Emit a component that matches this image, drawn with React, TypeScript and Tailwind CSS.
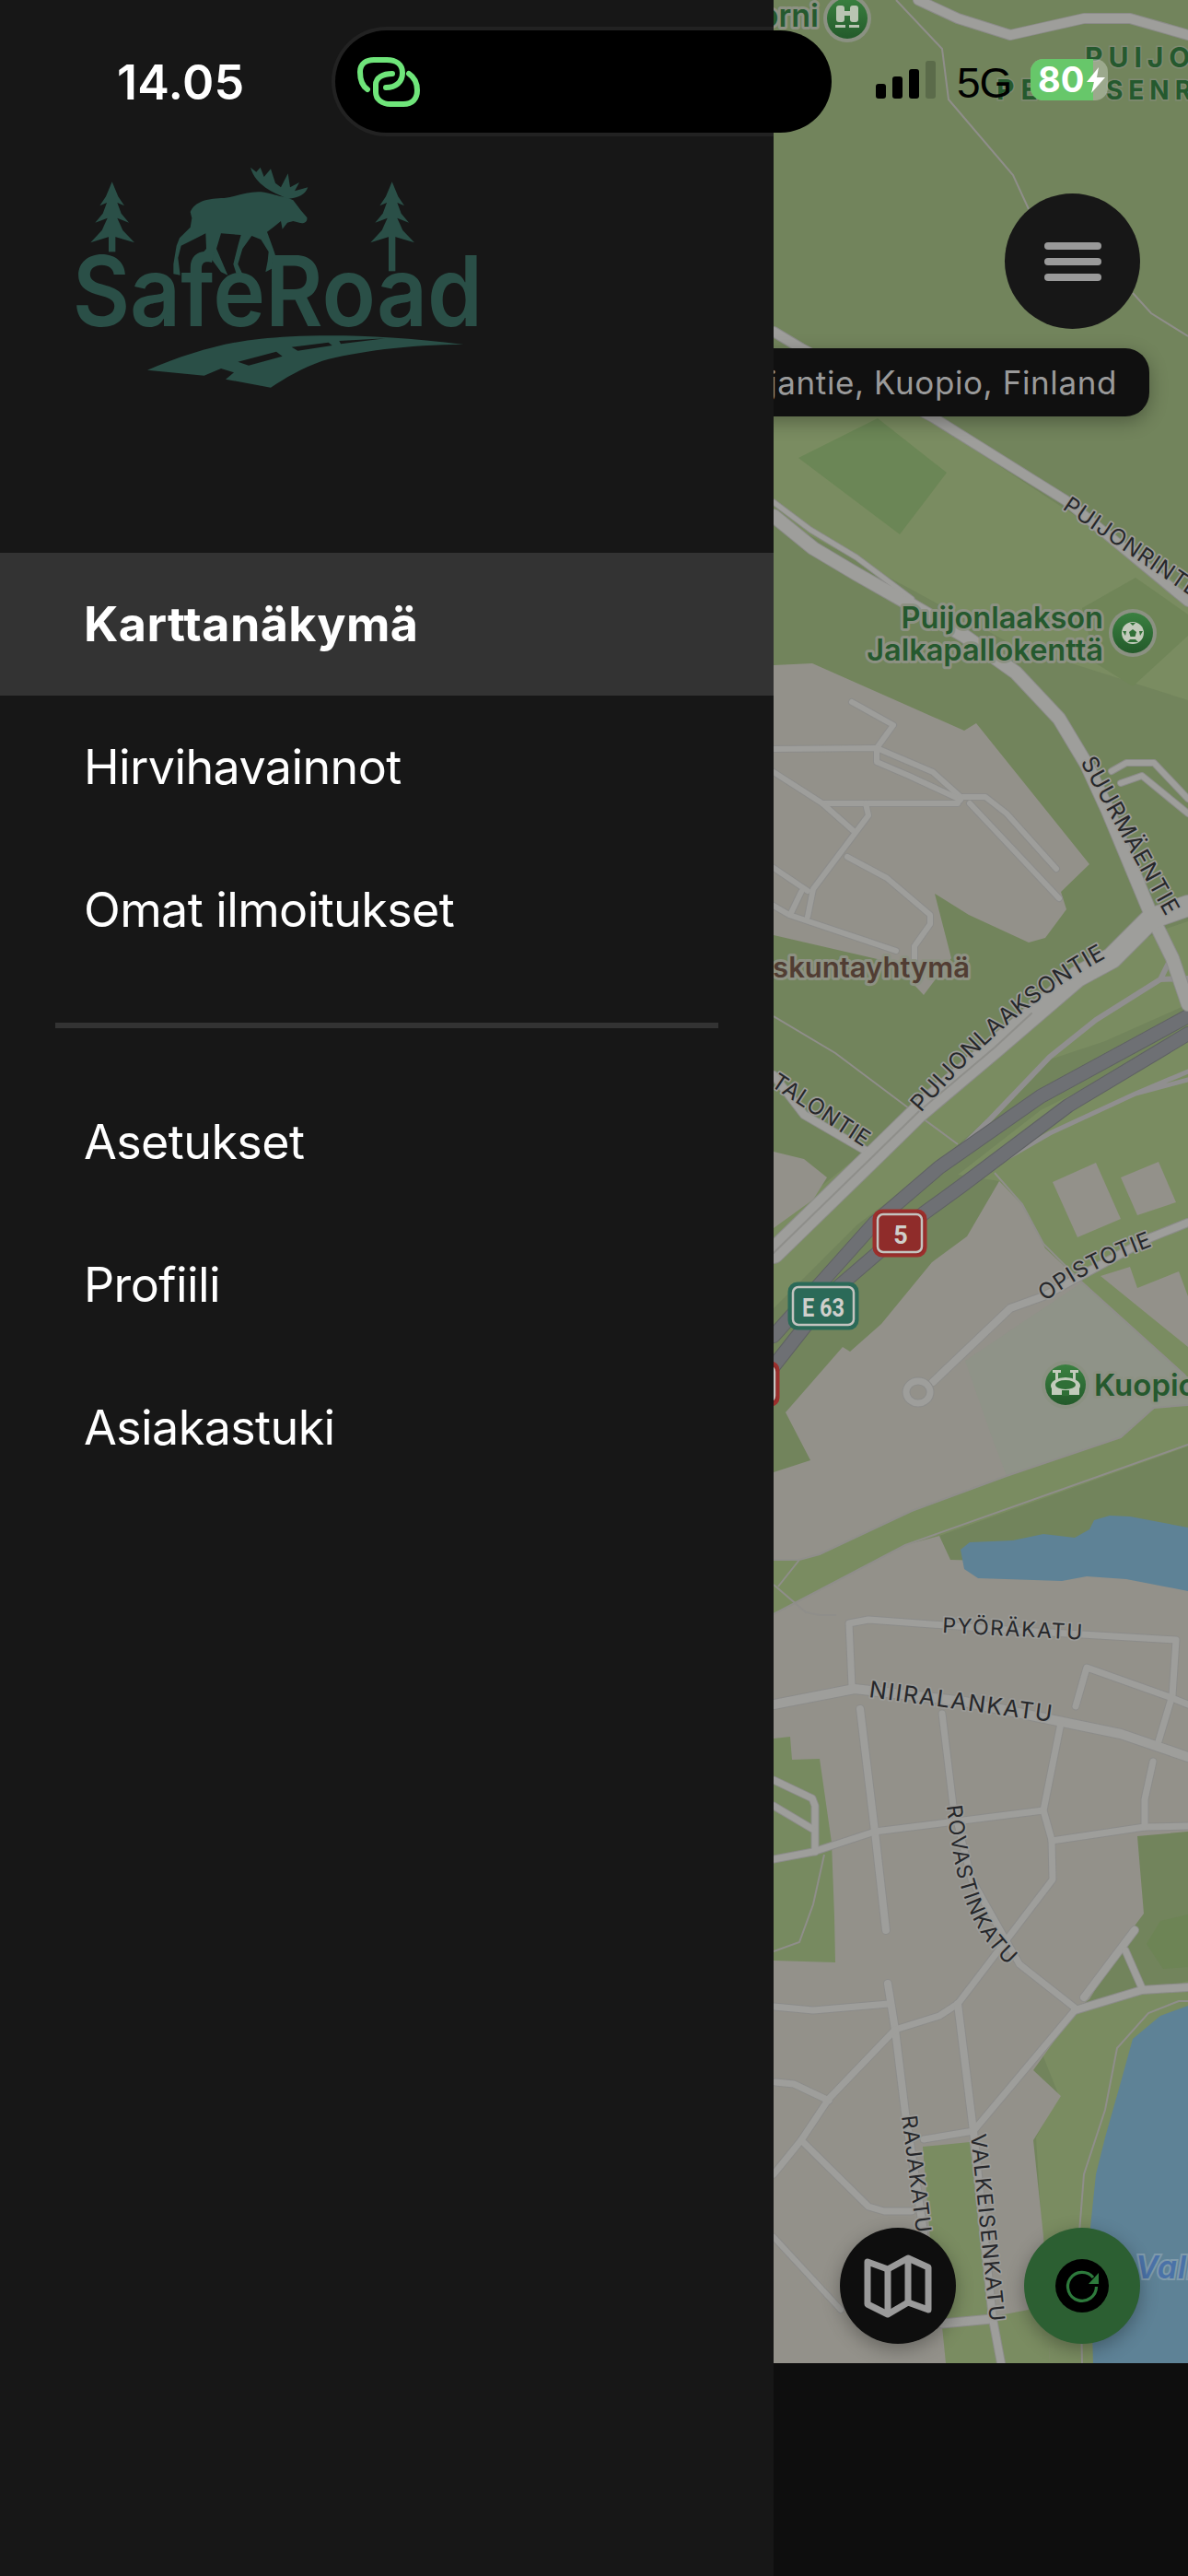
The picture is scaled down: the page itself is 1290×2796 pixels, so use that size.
import React from 'react';

const FONT = "font-['Inter','Noto_Sans',sans-serif]";
const ROAD_FILL = '#9e9e9b';
const ROAD_CASE = '#8c8c8a';

// all map coordinates are page pixels, the svg viewBox starts at the drawer edge
const lightGreen = [
  'M840 1752L983 1677L1020 1667L1290 1570V1525H1253L1217 1560L1093 1602L990 1640L890 1687L840 1693Z',
  'M1290 1125L1130 1205L1040 1275L1085 1282L1135 1355L1175 1392L1290 1495Z',
  'M840 1330L950 1240L1000 1200L1080 1135L1170 1060L1260 1010L1290 1000V1090L1200 1130L1140 1150L1060 1225L1010 1270L930 1330L840 1420Z',
  'M840 380L1000 450L1290 640V760L1100 700L990 640L840 560Z',
  'M1120 2200L1290 2150V2565H1140L1125 2320L1150 2275Z',
  'M893 1880H906V2128H840V1890Z',
];

const blocks = [
  'M840 1015V722L882 720L1047 793L1060 785L1183 938L1152 968L1158 987L1135 1018L1117 1023L1052 993L1015 970L1033 1040L1003 1080L970 1045Z',
  'M840 1250L873 1258L898 1278L883 1302L840 1333Z',
  'M1085 1282L1112 1310L1135 1355L1175 1392L1290 1495V1525L1253 1528L1217 1560L1093 1602L990 1640L890 1687L868 1693H840V1598L880 1585L867 1560L853 1533L915 1462L923 1467L957 1437L1012 1370L1050 1342Z',
  'M1195 1385L1227 1375L1235 1398L1280 1380L1290 1407V1462Z',
  'M1143 1283L1190 1262L1217 1323L1170 1343Z',
  'M1217 1278L1258 1261L1277 1305L1235 1319Z',
  'M840 1752L983 1677L1020 1667L1032 1693L1290 1700V1988L1235 1993L1242 2077L1227 2097L1183 2170L1170 2180L1122 2247L1152 2275L1122 2323L1133 2427L1140 2565H840Z',
];

const roads: [number, string][] = [
  [10, 'M997 0L1040 20L1097 38L1177 20L1227 20L1290 38'],
  [10, 'M840 360L870 378L1013 453L1120 520L1157 543L1290 653'],
  [14, 'M840 560L883 595L930 623L990 657L1047 690L1103 730L1150 780L1180 830L1203 880L1250 993L1273 1040L1290 1090'],
  [5, 'M840 545L880 575L930 605L990 650'],
  [6, 'M1207 837L1223 828L1253 828L1290 867'],
  [6, 'M1217 850L1240 842L1290 883'],
  [6, 'M925 762L970 787L952 812'],
  [6, 'M840 813L952 812L1013 838L1043 865L1070 865L1093 883L1147 943'],
  [6, 'M952 812V827L987 842L1043 868'],
  [6, 'M893 872H1040L1043 865'],
  [6, 'M1053 872L1150 975'],
  [6, 'M840 838L893 872L928 903'],
  [6, 'M940 872L943 885L883 965L877 995'],
  [6, 'M920 930L963 953L1010 993V1003L993 1027V1050'],
  [6, 'M840 942L877 967'],
  [6, 'M840 983L857 993L973 1032'],
  [6, 'M870 968L858 993'],
  [8, 'M840 1167L873 1210L947 1253'],
  [8, 'M1013 1500L1097 1420L1133 1407L1250 1343L1290 1327'],
  [7, 'M925 1830L922 1762L943 1758L1107 1770L1277 1780L1273 1840L1258 1890'],
  [10, 'M840 1850L928 1833L1047 1847L1217 1882L1290 1907'],
  [7, 'M1168 1852L1180 1810L1270 1842L1290 1850'],
  [8, 'M934 1855L950 1988L962 2095'],
  [7, 'M1023 1860L1035 1960L1055 2040L1107 2132L1168 2180'],
  [7, 'M840 2018L883 2010L950 1988L1133 1965'],
  [7, 'M1152 1870L1133 1965L1142 1997L1143 2040L1040 2175'],
  [7, 'M1142 1998L1243 1983L1290 1982'],
  [7, 'M1252 1912L1243 1953V1983'],
  [7, 'M840 1932L882 1952L885 1960V2010'],
  [7, 'M840 1960L882 1985'],
  [7, 'M840 2178L883 2182L965 2175'],
  [8, 'M964 2153L972 2203L983 2293L1003 2423'],
  [7, 'M972 2203L1020 2188L1040 2175'],
  [8, 'M1040 2175L1057 2313'],
  [7, 'M1057 2313L1167 2182'],
  [8, 'M1167 2182L1240 2160L1290 2157'],
  [8, 'M1177 2168L1232 2095'],
  [7, 'M1222 2117L1240 2158'],
  [7, 'M972 2203L900 2278L870 2323L840 2360'],
  [7, 'M842 2260L862 2262L900 2280'],
  [7, 'M870 2323L943 2395L960 2400H990'],
  [6, 'M840 2428L913 2507'],
  [7, 'M1003 2322L1057 2313'],
  [9, 'M1023 2522L1077 2517'],
  [8, 'M1057 2313L1078 2517L1087 2565'],
];

const thinPaths = [
  'M973 0L1023 53L1030 108L1100 190L1117 227M1230 318L1250 340L1290 365',
  'M840 1103L907 1143L983 1200L1040 1242M1080 1273L1110 1307L1133 1350L1173 1390L1287 1493',
  'M840 1693H868L890 1687L990 1640L1093 1602L1217 1560L1253 1528L1290 1525',
  'M840 1752L983 1677L1290 1568',
  'M840 1720L875 1750L890 1753H908M845 1722L868 1693',
  'M895 2013L883 2067L868 2108L840 2118',
  'M1290 2172H1280L1247 2185L1213 2223L1200 2290L1177 2360L1172 2423L1175 2565',
];

const roadLabels = [
  { id: 'l1', text: 'PUIJONRINTE', d: 'M1153 552L1300 652', size: 24, len: 172 },
  { id: 'l2', text: 'SUURMÄENTIE', d: 'M1173 827L1268 998', size: 25, len: 192 },
  { id: 'l3', text: 'PUIJONLAAKSONTIE', d: 'M1000 1208C1060 1140 1110 1090 1200 1040', size: 25, len: 264 },
  { id: 'l4', text: 'TALONTIE', d: 'M836 1178L945 1250', size: 24, len: 122 },
  { id: 'l5', text: 'OPISTOTIE', d: 'M1135 1413C1170 1385 1205 1370 1252 1352', size: 24, len: 132 },
  { id: 'l6', text: 'PYÖRÄKATU', d: 'M1023 1772L1180 1780', size: 23, len: 152 },
  { id: 'l7', text: 'NIIRALANKATU', d: 'M943 1842L1150 1870', size: 25, len: 200 },
  { id: 'l8', text: 'ROVASTINKATU', d: 'M1028 1960C1036 2030 1045 2090 1098 2136', size: 23, len: 190 },
  { id: 'l9', text: 'RAJAKATU', d: 'M979 2297L996 2430', size: 23, len: 128 },
  { id: 'l10', text: 'VALKEISENKATU', d: 'M1054 2317L1076 2530', size: 23, len: 204 },
];

const PoiBadge: React.FC<{ cx: number; cy: number; children?: React.ReactNode }> = ({ cx, cy, children }) => (
  <g transform={`translate(${cx} ${cy})`}>
    <circle r="26" fill="#8b9182" />
    <circle r="22" fill="url(#poi)" />
    {children}
  </g>
);

const MapLabel: React.FC<{ x: number; y: number; anchor?: 'start' | 'end'; size: number; fill: string; children: React.ReactNode }> = ({ x, y, anchor = 'start', size, fill, children }) => (
  <text x={x} y={y} textAnchor={anchor} fontSize={size} fontWeight={600} fill={fill} stroke="#8d9183" strokeWidth={6} strokeLinejoin="round" paintOrder="stroke" fontFamily="Inter, sans-serif">
    {children}
  </text>
);

const MapCanvas: React.FC = () => (
  <svg className="w-[450px] h-[2565px] block" viewBox="840 0 450 2565">
    <defs>
      <linearGradient id="poi" x1="0" y1="0" x2="0" y2="1">
        <stop offset="0" stopColor="#3a8040" />
        <stop offset="1" stopColor="#235a2a" />
      </linearGradient>
      {roadLabels.map((l) => (
        <path key={l.id} id={l.id} d={l.d} />
      ))}
    </defs>
    <rect x="840" y="0" width="450" height="2565" fill="#72845c" />
    {lightGreen.map((d) => (
      <path key={d} d={d} fill="#7a8c61" />
    ))}
    <path d="M867 497L953 454L1028 513L977 580Z" fill="#6b8656" />
    <path d="M1233 627L1290 667V690L1230 745L1190 720L1175 660Z" fill="#708558" />
    <path d="M1245 2110L1260 2085L1290 2078V2135L1263 2137Z" fill="#6d8455" />
    {blocks.map((d) => (
      <path key={d} d={d} fill="#93918a" />
    ))}
    <path d="M1048 1477L1077 1560L1093 1602L1217 1560L1253 1528L1290 1525V1495L1175 1392Z" fill="#8f9388" />
    <path d="M840 1887L858 1885L860 1910L890 1909L903 2000L906 2080L907 2130L840 2128Z" fill="#778a60" />
    <path d="M1002 2330L1053 2325L1075 2512L1023 2522L1010 2430Z" fill="#7a8c61" />
    <path d="M1023 2525L1117 2507L1135 2430L1140 2565H1027Z" fill="#7a8c61" />
    <path d="M1043 1682L1053 1674L1100 1672L1133 1665L1167 1669L1183 1660L1188 1650L1205 1645L1227 1646L1290 1658V1727L1223 1714L1180 1711L1153 1716L1062 1713L1047 1703Z" fill="#5e8296" />
    <path d="M1290 2177L1260 2188L1230 2213L1217 2260L1200 2320L1190 2360L1183 2427L1187 2565H1290Z" fill="#5e8296" />

    <g fill="none" stroke="#8f8e8a" strokeWidth="2">
      {thinPaths.map((d) => (
        <path key={d} d={d} />
      ))}
    </g>

    {/* ramps and highway */}
    <g fill="none" strokeLinecap="round" strokeLinejoin="round">
      <path d="M1027 1262L1073 1217L1140 1147L1190 1107L1260 1063L1270 1043M1260 1063L1290 1062" stroke="#908f8f" strokeWidth="6" />
      <path d="M1053 1285L1093 1257L1140 1230L1233 1187L1290 1163M1233 1187L1290 1172" stroke="#908f8f" strokeWidth="5" />
      <path d="M840 1450L950 1327L1020 1267L1130 1190L1290 1103" stroke="#5f6163" strokeWidth="16" />
      <path d="M840 1483L903 1403L1003 1317L1043 1288L1160 1200L1290 1122" stroke="#5f6163" strokeWidth="16" />
      <path d="M840 1450L950 1327L1020 1267L1130 1190L1290 1103" stroke="#6e7074" strokeWidth="14" />
      <path d="M840 1483L903 1403L1003 1317L1043 1288L1160 1200L1290 1122" stroke="#6e7074" strokeWidth="14" />
    </g>

    {/* streets */}
    <g fill="none" strokeLinecap="round" strokeLinejoin="round">
      <path d="M840 1360L950 1253L997 1207L1080 1137L1170 1060L1207 1040L1250 997L1290 983" stroke={ROAD_CASE} strokeWidth="24" />
      {roads.map(([w, d]) => (
        <path key={d} d={d} stroke={ROAD_CASE} strokeWidth={w + 2} />
      ))}
      {roads.map(([w, d]) => (
        <path key={d} d={d} stroke={ROAD_FILL} strokeWidth={w} />
      ))}
      <path d="M840 1360L950 1253L997 1207L1080 1137L1170 1060L1207 1040L1250 997L1290 983" stroke={ROAD_FILL} strokeWidth="22" />
      <path d="M840 1360L950 1253L997 1207L1080 1137L1120 1100" stroke="#8e8e8a" strokeWidth="2" />
      <ellipse cx="997" cy="1511" rx="13" ry="12" stroke={ROAD_CASE} strokeWidth="9" />
      <ellipse cx="997" cy="1511" rx="13" ry="12" stroke={ROAD_FILL} strokeWidth="7" />
    </g>

    {/* street names */}
    {roadLabels.map((l) => (
      <text key={l.id} fontSize={l.size} fill="#26272a" stroke="#9b9b98" strokeWidth={3.5} strokeLinejoin="round" paintOrder="stroke" fontFamily="Inter, sans-serif">
        <textPath href={`#${l.id}`} textLength={l.len} lengthAdjust="spacing">
          {l.text}
        </textPath>
      </text>
    ))}

    {/* place names */}
    <MapLabel x={889} y={29} anchor="end" size={34} fill="#25592e">orni</MapLabel>
    <g fontSize="30" fontWeight="700" fill="#25592e" stroke="#7f8a72" strokeWidth="3" paintOrder="stroke" fontFamily="Inter, sans-serif" letterSpacing="6">
      <text x="1178" y="73">PUIJO</text>
      <text x="1082" y="108" letterSpacing="7">PE</text>
      <text x="1201" y="108" fontSize="28" letterSpacing="6">SENR</text>
    </g>
    <MapLabel x={1198} y={682} anchor="end" size={32.5} fill="#25592e">Puijonlaakson</MapLabel>
    <MapLabel x={1198} y={717} anchor="end" size={32.5} fill="#25592e">Jalkapallokenttä</MapLabel>
    <MapLabel x={1053} y={1061} anchor="end" size={31} fill="#513d33">skuntayhtymä</MapLabel>
    <MapLabel x={1188} y={1515} size={33} fill="#25592e">Kuopio</MapLabel>
    <text x="1233" y="2473" fontSize="34" fontWeight="600" fontStyle="italic" fill="#4a72a8" stroke="#7f9aaa" strokeWidth="4" paintOrder="stroke" fontFamily="Inter, sans-serif" letterSpacing="1">Vall</text>

    {/* poi markers */}
    <PoiBadge cx={920} cy={20}>
      <g fill="#b9c4b2">
        <rect x="-12" y="-14" width="9" height="18" rx="3" />
        <rect x="3" y="-14" width="9" height="18" rx="3" />
        <rect x="-3" y="-8" width="6" height="5" />
        <rect x="-13" y="7" width="11" height="3" />
        <rect x="2" y="7" width="11" height="3" />
      </g>
    </PoiBadge>
    <PoiBadge cx={1230} cy={687}>
      <circle r="12" fill="#c2cbbb" />
      <path d="M0 -4L4 -1L2.5 4H-2.5L-4 -1Z" fill="#2f6f36" />
      <path d="M-3 -11L3 -11L0 -8ZM11 -2L8 3L7 -2ZM-11 -2L-8 3L-7 -2ZM-6 10L6 10L3 7H-3Z" fill="#2f6f36" />
    </PoiBadge>
    <PoiBadge cx={1157} cy={1503}>
      <g fill="#c2cbbb">
        <ellipse cx="0" cy="1" rx="16" ry="9" />
        <rect x="-15" y="1" width="30" height="10" />
        <rect x="-11" y="-15" width="3" height="11" />
        <rect x="8" y="-15" width="3" height="11" />
        <rect x="-14" y="-16" width="9" height="3" />
        <rect x="5" y="-16" width="9" height="3" />
      </g>
      <ellipse cx="0" cy="0" rx="11" ry="5" fill="#2f6f36" />
      <rect x="-4" y="6" width="8" height="6" fill="#2f6f36" />
    </PoiBadge>

    {/* road shields */}
    <g fontFamily="Roboto, sans-serif" fontWeight="700" textAnchor="middle">
      <rect x="949" y="1314" width="56" height="49" rx="9" fill="#8f2c2a" stroke="#9c2f2c" strokeWidth="3" />
      <rect x="953" y="1318" width="48" height="41" rx="6" fill="none" stroke="#c4c4c0" strokeWidth="2.5" />
      <text x="978" y="1350" fontSize="27" fill="#cfcfcb">5</text>
      <rect x="857" y="1393" width="74" height="49" rx="9" fill="#2b6a58" stroke="#2b6a58" strokeWidth="3" />
      <rect x="861" y="1397" width="66" height="41" rx="6" fill="none" stroke="#c4c4c0" strokeWidth="2.5" />
      <text x="894" y="1429" fontSize="27" fill="#cfcfcb" textLength="46" lengthAdjust="spacingAndGlyphs">E 63</text>
      <rect x="800" y="1479" width="45" height="46" rx="8" fill="#8f2c2a" stroke="#9c2f2c" strokeWidth="3" />
      <rect x="800" y="1483" width="41" height="38" rx="6" fill="none" stroke="#c4c4c0" strokeWidth="2.5" />
    </g>
  </svg>
);

const Tree: React.FC<{ x: number; trunk: number }> = ({ x, trunk }) => (
  <g transform={`translate(${x} 0)`}>
    <path d="M0 82L20 130L40 160L17 150L30 185L55 215L17 200L35 240L73 280L12 262H-12L-70 280L-33 240L-15 200L-55 215L-30 185L-17 150L-40 160L-20 130Z" />
    <rect x="-11" y="255" width="22" height={trunk - 255} />
  </g>
);

const Logo: React.FC = () => (
  <svg className="w-[470px] h-[260px] block ml-[70px]" viewBox="0 0 1410 780" fill="#2a4f47">
    <Tree x={155} trunk={310} />
    <Tree x={1067} trunk={373} />
    <path d="M410 180C425 145 470 135 520 135C560 130 600 112 640 115C670 118 695 130 722 132L745 142L770 175L790 198C792 212 782 218 768 216L745 210L726 215L710 236L705 210L680 230L660 245L680 300L690 330L675 365L655 376L662 340L665 310L640 270L610 258L580 300L565 350L582 386L560 382L550 350L565 290L575 255L510 250L495 300L532 386L510 376L470 322L440 325L462 300L460 250L380 290L370 330L377 386L355 382L355 350L365 290L375 265L410 230L415 200Z" />
    <path d="M722 134C680 118 622 92 606 35L625 50L638 35L650 66L672 40L687 86L705 100L728 55L735 100L765 84L750 112L793 100C785 124 760 135 730 137Z" />
    <text x="26" y="552" fontSize="316" fontWeight="600" fontFamily="Inter, sans-serif" textLength="1336" lengthAdjust="spacingAndGlyphs">SafeRoad</text>
    <path d="M270 695C400 640 520 605 640 593C760 580 1000 572 1300 612C1120 612 950 635 840 665C770 690 720 720 672 752L525 725L552 703L510 690L455 713Z" />
    <g fill="#171717">
      <path d="M565 668L690 635L710 650L600 680Z" />
      <path d="M740 620L860 605L872 615L760 632Z" />
      <path d="M895 600L1045 592L900 610Z" />
    </g>
  </svg>
);

const navTop = ['Karttanäkymä', 'Hirvihavainnot', 'Omat ilmoitukset'];
const navBottom = ['Asetukset', 'Profiili', 'Asiakastuki'];

const NavItem: React.FC<{ label: string; active?: boolean }> = ({ label, active }) => (
  <div className={`h-[155px] flex items-center pl-[91px] text-[52px] text-white ${active ? 'bg-[#333333] font-bold tracking-[0.4px]' : 'font-normal tracking-[-0.6px]'}`}>
    {label}
  </div>
);

const App: React.FC = () => {
  return (
    <div className={`relative w-[1290px] h-[2796px] flex overflow-hidden bg-[#0e0e0e] ${FONT}`}>
      {/* drawer */}
      <aside className="relative w-[840px] h-full bg-[#171717] overflow-hidden">
        <div className="absolute left-[360px] top-[29px] w-[600px] h-[119px] rounded-[60px] bg-[#222222]" />
        <div className="pt-[170px] h-[600px]">
          <Logo />
        </div>
        <nav>
          {navTop.map((label, i) => (
            <NavItem key={label} label={label} active={i === 0} />
          ))}
        </nav>
        <div className="mx-[60px] mt-[45px] mb-[46px] h-[6px] bg-[#333333]" />
        <nav>
          {navBottom.map((label) => (
            <NavItem key={label} label={label} />
          ))}
        </nav>
      </aside>

      {/* map side */}
      <main className="flex-1 h-full flex flex-col">
        <div className="relative h-[2565px] overflow-hidden">
          <MapCanvas />
          <button className="absolute left-[251px] top-[210px] w-[147px] h-[147px] rounded-full bg-[#171717] flex flex-col items-center justify-center gap-[9px]">
            <span className="block w-[62px] h-[8px] rounded-full bg-[#9a9a9a]" />
            <span className="block w-[62px] h-[8px] rounded-full bg-[#9a9a9a]" />
            <span className="block w-[62px] h-[8px] rounded-full bg-[#9a9a9a]" />
          </button>
          <div className="absolute left-[-40px] top-[378px] w-[448px] h-[74px] rounded-[26px] bg-[#101010] flex items-center justify-end pr-[35px] shadow-[0_6px_20px_rgba(0,0,0,0.3)] overflow-hidden">
            <span className="text-[35px] tracking-[0.6px] text-[#9a9a9a] whitespace-nowrap">jantie, Kuopio, Finland</span>
          </div>
          <button className="absolute left-[72px] top-[2418px] w-[126px] h-[126px] rounded-full bg-[#0e0e0e] shadow-[0_6px_20px_rgba(0,0,0,0.3)]">
            <svg className="w-[126px] h-[126px] block" viewBox="0 0 126 126" fill="none" stroke="#9a9a9a" strokeWidth="7" strokeLinejoin="round">
              <path d="M30 37L52 45L74 33L96 43V89L74 81L52 94L30 83Z" />
              <path d="M52 45V94M74 33V81" />
            </svg>
          </button>
          <button className="absolute left-[272px] top-[2418px] w-[126px] h-[126px] rounded-full bg-[#2c5f32] flex items-center justify-center shadow-[0_6px_20px_rgba(0,0,0,0.3)]">
            <svg className="w-[58px] h-[58px] block" viewBox="0 0 58 58">
              <circle cx="29" cy="29" r="29" fill="#000000" />
              <path d="M41 20A15.5 15.5 0 1 0 44.5 30" fill="none" stroke="#2d7a3c" strokeWidth="3.2" />
              <path d="M47 15V27H36Z" fill="#2d7a3c" />
            </svg>
          </button>
        </div>
        <div className="flex-1 bg-[#0e0e0e]" />
      </main>

      {/* status bar over both panes */}
      <span className="absolute left-[127px] top-[59px] text-[52px] leading-[62px] font-semibold text-white tracking-[0.3px]">14.05</span>
      <div className="absolute left-[364px] top-[33px] w-[539px] h-[111px] rounded-[56px] bg-black">
        <svg className="absolute left-[24px] top-[29px] w-[68px] h-[54px]" viewBox="0 0 68 54" fill="none" stroke="#6fe57a" strokeWidth="6" strokeLinecap="round">
          <path d="M11 35C5 31 3 24 3 16C3 7 10 3 18 3H32C42 3 49 8 49 17C49 27 42 33 31 33" />
          <path d="M38 18C28 18 20 22 20 30V38C20 46 27 51 36 51H50C60 51 65 45 65 36C65 28 62 22 56 18" />
        </svg>
      </div>
      <div className="absolute left-[951px] top-[66px] h-[41px] flex items-end gap-[7px]">
        <span className="block w-[11px] h-[16px] rounded-[3px] bg-black" />
        <span className="block w-[11px] h-[24px] rounded-[3px] bg-black" />
        <span className="block w-[11px] h-[32px] rounded-[3px] bg-black" />
        <span className="block w-[11px] h-[41px] rounded-[3px] bg-[#5b6b4a]" />
      </div>
      <span className="absolute left-[1039px] top-[64px] text-[46px] leading-[52px] tracking-[-1px] text-black font-['Liberation_Sans',sans-serif]">5G</span>
      <div className="absolute left-[1119px] top-[64px] w-[84px] h-[45px] rounded-[14px] bg-white/30 overflow-hidden">
        <div className="h-full w-[68px] bg-[#67c76a]" />
      </div>
      <span className="absolute left-[1127px] top-[63px] text-[38px] leading-[46px] font-bold text-white">80</span>
      <svg className="absolute left-[1180px] top-[73px] w-[20px] h-[28px]" viewBox="0 0 20 28" fill="#ffffff">
        <path d="M13 0L0 16H8L5 28L20 11H11Z" />
      </svg>
    </div>
  );
};

export default App;
